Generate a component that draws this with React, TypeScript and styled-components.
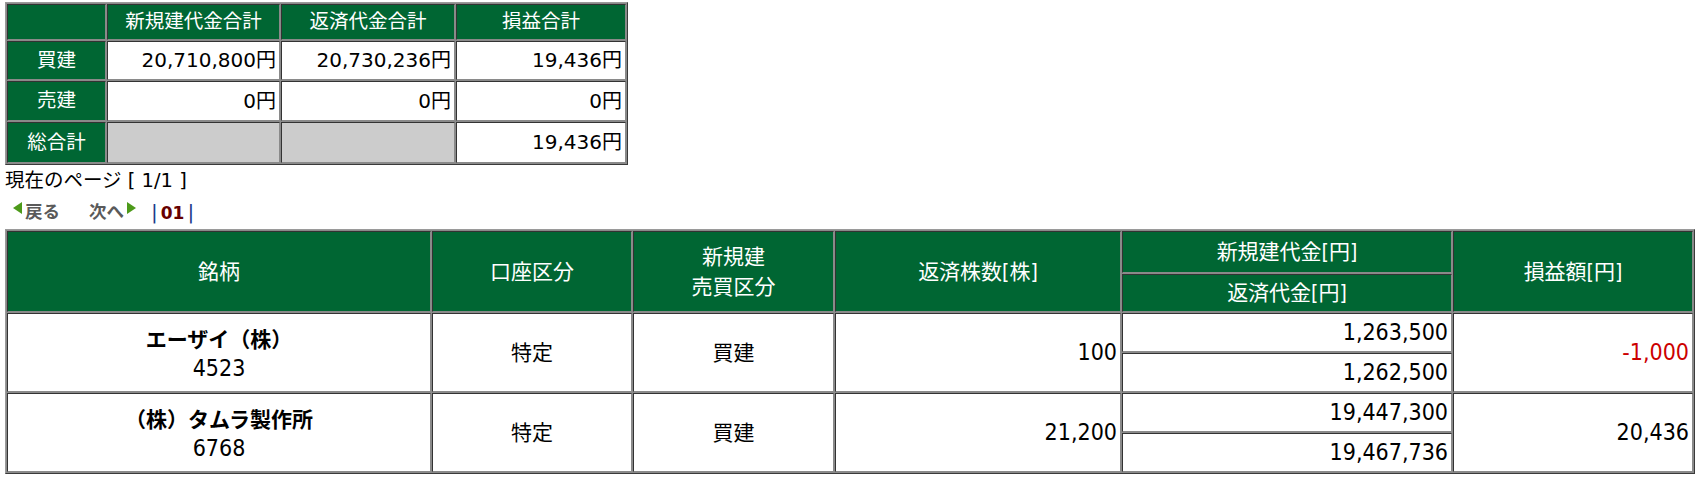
import React from 'react'
import styled, { createGlobalStyle } from 'styled-components'

const GlobalStyle = createGlobalStyle`
  html, body {
    margin: 0;
    background: #ffffff;
  }
  body {
    padding: 2px 3px 0 5px;
    font-family: "DejaVu Sans", "Noto Sans CJK JP", sans-serif;
    color: #000000;
  }
`

const GREEN = '#006633'

const Grid = styled.table<{ width?: number }>`
  border-collapse: separate;
  border-spacing: 1px;
  background: #8a8a8a;
  border: 1px solid;
  border-color: #9a9a9a #3a3a3a #3a3a3a #9a9a9a;
  table-layout: fixed;
  width: ${p => (p.width ? `${p.width}px` : '100%')};
`

const Cell = styled.td<{ head?: boolean; align?: string; h?: number; blank?: boolean }>`
  box-sizing: border-box;
  border: 1px solid;
  border-color: #333333 #8a8a8a #8a8a8a #333333;
  background: ${p => (p.head ? GREEN : p.blank ? '#cccccc' : '#ffffff')};
  color: ${p => (p.head ? '#ffffff' : '#000000')};
  text-align: ${p => p.align || 'center'};
  ${p => (p.h ? `height: ${p.h}px;` : '')}
  line-height: 30px;
  padding: 0 3px;
  vertical-align: middle;
  white-space: nowrap;
`

const SumTable = styled(Grid)`
  font-size: 19.5px;
`

const SumValue = styled.span`
  font-size: 20px;
`

const PageInfo = styled.div`
  font-size: 19.5px;
  line-height: 30px;
  height: 30px;
  margin-top: 1px;
`

const Nav = styled.div`
  display: flex;
  align-items: center;
  height: 30px;
  padding-left: 8px;
  font-size: 17.5px;
`

const NavLink = styled.span<{ gapAfter: number }>`
  display: flex;
  align-items: center;
  gap: 3px;
  color: #5a5a5a;
  font-weight: bold;
  font-family: "Noto Sans CJK JP", sans-serif;
  line-height: 24px;
  margin-right: ${p => p.gapAfter}px;
`

const Arrow = styled.span<{ dir: 'l' | 'r' }>`
  display: inline-block;
  width: 0;
  height: 0;
  border-top: 6px solid transparent;
  border-bottom: 6px solid transparent;
  ${p => (p.dir === 'l' ? `border-right: 9px solid #4d9a1a;` : `border-left: 9px solid #4d9a1a;`)}
  margin-top: -7px;
`

const Pipe = styled.span`
  color: #1a3a8a;
  font-size: 20px;
  line-height: 24px;
  margin: 2px 3px 0;
`

const PageNo = styled.span`
  color: #660000;
  font-weight: bold;
  font-size: 17px;
  line-height: 24px;
  margin-top: 3px;
  font-family: "DejaVu Sans", sans-serif;
`

const ListTable = styled(Grid)`
  margin-top: 3px;
  font-family: "DejaVu Sans Condensed", "DejaVu Sans", "Noto Sans CJK JP", sans-serif;
  font-size: 21px;
`

const Name = styled.div`
  font-weight: bold;
  font-family: "Noto Sans CJK JP", sans-serif;
  line-height: 30px;
  height: 30px;
`

const Num = styled.span<{ neg?: boolean }>`
  font-size: 23px;
  color: ${p => (p.neg ? '#cc0000' : '#000000')};
`

const Code = styled(Num)`
  display: block;
  line-height: 30px;
  height: 30px;
`

const summary = [
  { label: '買建', a: '20,710,800円', b: '20,730,236円', c: '19,436円', h: 39 },
  { label: '売建', a: '0円', b: '0円', c: '0円', h: 40 },
]

const positions = [
  { name: 'エーザイ（株）', code: '4523', account: '特定', side: '買建', qty: '100', open: '1,263,500', close: '1,262,500', pl: '-1,000' },
  { name: '（株）タムラ製作所', code: '6768', account: '特定', side: '買建', qty: '21,200', open: '19,447,300', close: '19,467,736', pl: '20,436' },
]

const App = () => (
  <>
    <GlobalStyle />
    <SumTable width={623}>
      <colgroup>
        <col style={{ width: 99 }} />
        <col style={{ width: 173 }} />
        <col style={{ width: 174 }} />
      </colgroup>
      <tbody>
        <tr>
          <Cell head h={36}></Cell>
          <Cell head h={36}>新規建代金合計</Cell>
          <Cell head h={36}>返済代金合計</Cell>
          <Cell head h={36}>損益合計</Cell>
        </tr>
        {summary.map(r => (
          <tr key={r.label}>
            <Cell head h={r.h}>{r.label}</Cell>
            <Cell align="right" h={r.h}><SumValue>{r.a}</SumValue></Cell>
            <Cell align="right" h={r.h}><SumValue>{r.b}</SumValue></Cell>
            <Cell align="right" h={r.h}><SumValue>{r.c}</SumValue></Cell>
          </tr>
        ))}
        <tr>
          <Cell head h={41}>総合計</Cell>
          <Cell blank h={41}></Cell>
          <Cell blank h={41}></Cell>
          <Cell align="right" h={41}><SumValue>19,436円</SumValue></Cell>
        </tr>
      </tbody>
    </SumTable>

    <PageInfo>現在のページ [ 1/1 ]</PageInfo>
    <Nav>
      <NavLink gapAfter={29}><Arrow dir="l" />戻る</NavLink>
      <NavLink gapAfter={12}>次へ<Arrow dir="r" /></NavLink>
      <Pipe>|</Pipe>
      <PageNo>01</PageNo>
      <Pipe>|</Pipe>
    </Nav>

    <ListTable>
      <colgroup>
        <col style={{ width: 424 }} />
        <col style={{ width: 200 }} />
        <col style={{ width: 201 }} />
        <col style={{ width: 286 }} />
        <col style={{ width: 330 }} />
        <col />
      </colgroup>
      <tbody>
        <tr>
          <Cell head rowSpan={2}>銘柄</Cell>
          <Cell head rowSpan={2}>口座区分</Cell>
          <Cell head rowSpan={2}>新規建<br />売買区分</Cell>
          <Cell head rowSpan={2}>返済株数[株]</Cell>
          <Cell head h={42}>新規建代金[円]</Cell>
          <Cell head rowSpan={2}>損益額[円]</Cell>
        </tr>
        <tr>
          <Cell head h={38}>返済代金[円]</Cell>
        </tr>
        {positions.map(p => (
          <React.Fragment key={p.code}>
            <tr>
              <Cell rowSpan={2}>
                <Name>{p.name}</Name>
                <Code>{p.code}</Code>
              </Cell>
              <Cell rowSpan={2}>{p.account}</Cell>
              <Cell rowSpan={2}>{p.side}</Cell>
              <Cell rowSpan={2} align="right"><Num>{p.qty}</Num></Cell>
              <Cell align="right" h={39}><Num>{p.open}</Num></Cell>
              <Cell rowSpan={2} align="right">
                <Num neg={p.pl.startsWith('-')}>{p.pl}</Num>
              </Cell>
            </tr>
            <tr>
              <Cell align="right" h={39}><Num>{p.close}</Num></Cell>
            </tr>
          </React.Fragment>
        ))}
      </tbody>
    </ListTable>
  </>
)

export default App
